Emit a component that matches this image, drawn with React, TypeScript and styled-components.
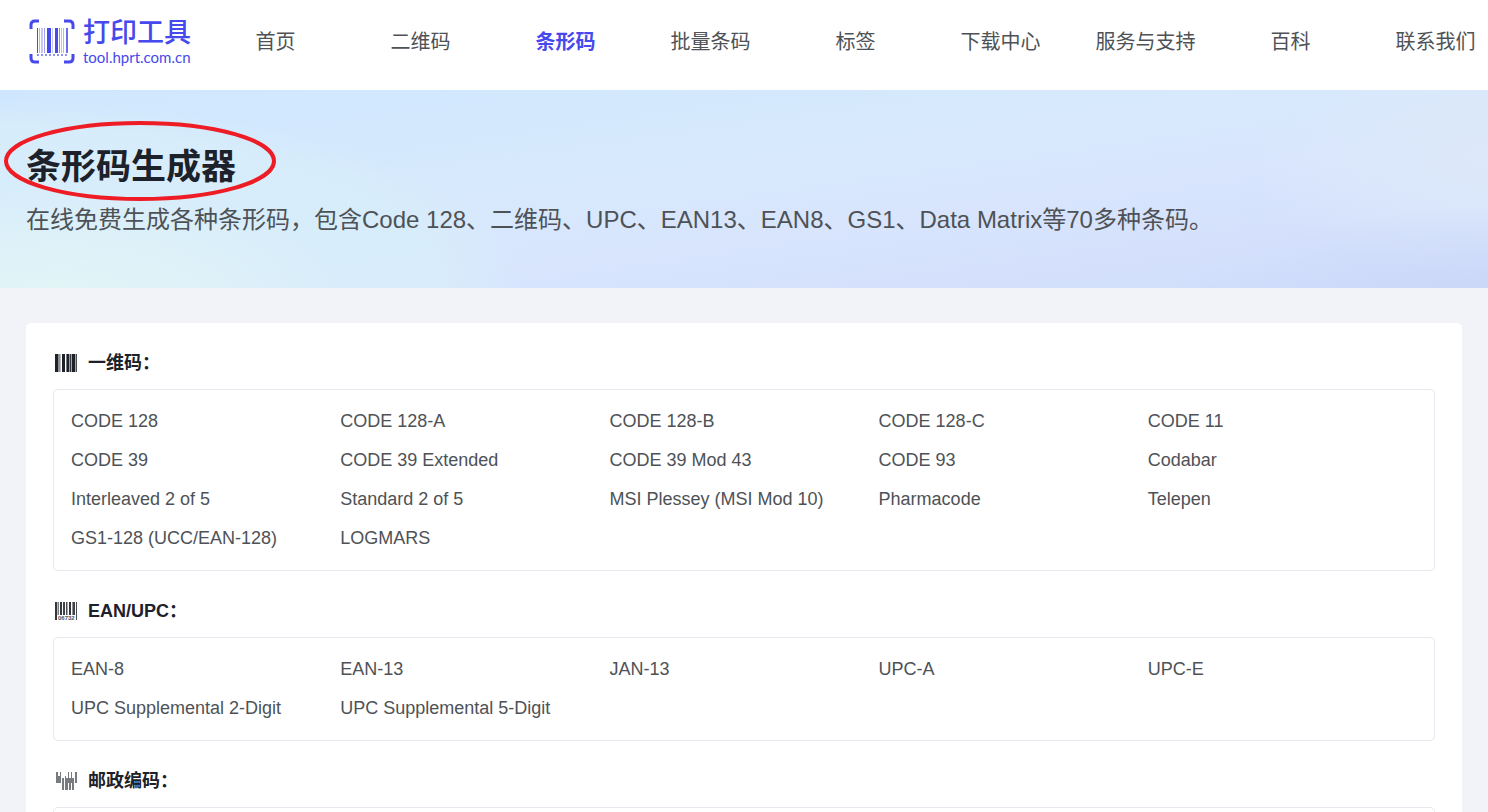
import React from "react";
import styled, { createGlobalStyle } from "styled-components";

const GlobalStyle = createGlobalStyle`
  * { box-sizing: border-box; }
  html { overflow: hidden; height: 100%; }
  body {
    margin: 0;
    height: 100%;
    overflow: hidden;
    background: #f2f3f9;
    color: #1d2129;
    font-family: "Liberation Sans", "Noto Sans CJK SC", sans-serif;
  }
  a { color: inherit; text-decoration: none; }
`;

const Header = styled.header`
  display: flex;
  align-items: center;
  height: 90px;
  padding-left: 28px;
  background: #fff;
  overflow: hidden;
`;

const LogoLink = styled.a`
  display: flex;
  flex: none;
  align-items: center;
  gap: 8px;
  width: 175px;
  padding-bottom: 6px;
  && { color: #4649eb; }
`;

const LogoText = styled.span`
  display: flex;
  flex-direction: column;
  white-space: nowrap;
`;

const LogoName = styled.span`
  font-size: 27px;
  line-height: 30px;
  font-weight: 500;
`;

const LogoDomain = styled.span`
  font: 400 15px/18px Lato, sans-serif;
`;

const Nav = styled.nav`
  display: flex;
`;

const NavLink = styled.a<{ $active?: boolean }>`
  flex: none;
  width: 145px;
  font-size: 20px;
  line-height: 30px;
  text-align: center;
  padding-bottom: 6px;
  font-weight: ${(p) => (p.$active ? 700 : 400)};
  && { color: ${(p) => (p.$active ? "#4649eb" : "#4e5256")}; }
`;

const Banner = styled.section`
  height: 198px;
  padding: 53px 26px 0;
  background:
    radial-gradient(ellipse 20% 60% at 4% 108%, rgba(228, 246, 246, 0.95), rgba(228, 246, 246, 0) 100%),
    radial-gradient(ellipse 35% 95% at 0% 100%, rgba(216, 238, 250, 0.8) 0%, rgba(216, 238, 250, 0.8) 85%, rgba(216, 238, 250, 0) 100%),
    radial-gradient(ellipse 26% 50% at 104% 108%, rgba(200, 212, 248, 0.7), rgba(200, 212, 248, 0) 100%),
    radial-gradient(ellipse 16% 60% at 100% 35%, rgba(222, 234, 249, 0.9), rgba(222, 234, 249, 0) 100%),
    linear-gradient(172deg, #cfe7fe 0%, #d3e8fd 25%, #d7e9fc 42%, #d8e5fd 62%, #d5e1fc 80%, #cedcf9 100%);
`;

const Title = styled.h1`
  position: relative;
  width: fit-content;
  margin: 0;
  font-size: 35px;
  line-height: 48px;
  font-weight: 700;
`;

const Marker = styled.svg`
  position: absolute;
  left: -22px;
  top: -23px;
  overflow: visible;
`;

const Subtitle = styled.p`
  margin: 5px 0 0;
  font-size: 24px;
  line-height: 48px;
  color: #4e5256;
`;

const Panel = styled.main`
  margin: 35px 26px 0;
  padding: 22px 27px;
  border-radius: 5px;
  background: #fff;
`;

const Group = styled.section`
  margin-bottom: 22px;
`;

const GroupTitle = styled.h2`
  display: flex;
  align-items: center;
  gap: 10px;
  height: 36px;
  margin: 0 0 8px;
  padding-left: 1px;
  font-size: 18px;
  line-height: 36px;
  font-weight: 700;
`;

const LinkGrid = styled.div`
  display: grid;
  grid-template-columns: repeat(5, 1fr);
  min-height: 100px;
  padding: 12px 17px;
  border: 1px solid #e7e8f0;
  border-radius: 5px;
`;

const CodeLink = styled.a`
  font-size: 18px;
  line-height: 39px;
  white-space: nowrap;
  && { color: #4e5256; }
`;

type Bar = [x: number, width: number, opacity: number];

const logoBars: Bar[] = [
  [9, 1, 1], [11, 1, 0.4], [13, 2, 0.3], [16, 1, 0.5], [19, 4, 1], [24, 1, 0.3],
  [27, 3, 1], [31, 1, 0.6], [33, 1, 0.35], [35, 1, 0.4], [38, 2, 0.8],
];

function LogoMark() {
  return (
    <svg width="47" height="46" viewBox="0 0 47 46" fill="none" stroke="currentColor" aria-hidden="true">
      <path
        d="M3 10V6Q3 2 7 2H11M36 2H41Q45 2 45 6V10M45 35V39Q45 43 41 43H36M11 43H7Q3 43 3 39V35"
        strokeWidth="3"
      />
      {logoBars.map(([x, w, o]) => (
        <rect key={x} x={x} y="9" width={w} height="25" fill="currentColor" stroke="none" opacity={o} />
      ))}
      <path d="M9 36H41" strokeWidth="2" strokeDasharray="2 2" opacity="0.6" />
    </svg>
  );
}

const linearBars: Bar[] = [
  [0, 3, 1], [3, 2, 0.5], [5, 1, 0.3], [7, 3, 1], [11, 1, 0.6], [12, 2, 1], [14, 1, 0.45],
  [15, 1, 0.9], [16, 1, 0.4], [17, 3, 1], [20, 1, 0.4], [21, 1, 0.8],
];

const eanBars: Bar[] = [
  [0, 2, 0.9], [2, 1, 0.3], [3, 1, 0.6], [5, 2, 0.9], [8, 2, 0.85], [11, 1, 0.8], [12, 1, 0.4],
  [14, 2, 0.9], [17, 1, 0.5], [18, 2, 0.85], [21, 1, 0.8],
];

const postalBars: [x: number, y: number, width: number, height: number][] = [
  [1, 1, 2, 11], [3, 5, 2, 7], [5, 1, 1, 11], [7, 7, 2, 12], [10, 5, 1, 14],
  [11, 7, 2, 12], [13, 1, 1, 11], [14, 7, 2, 12], [16, 1, 1, 11], [17, 7, 2, 12], [20, 1, 2, 11],
];

type IconKind = "linear" | "ean" | "postal";

function GroupIcon({ kind }: { kind: IconKind }) {
  return (
    <svg width="24" height="20" viewBox="-1 0 24 20" fill="#1d2129" aria-hidden="true">
      {kind === "linear" &&
        linearBars.map(([x, w, o]) => <rect key={x} x={x} y="1" width={w} height="18" opacity={o} />)}
      {kind === "ean" && (
        <>
          {eanBars.map(([x, w, o], i) => (
            <rect key={x} x={x} y="1" width={w} height={i === 0 || i === eanBars.length - 1 ? 18 : 13} opacity={o} />
          ))}
          <text x="3" y="19" fontSize="6" fontWeight="700" opacity="0.8">06732</text>
        </>
      )}
      {kind === "postal" &&
        postalBars.map(([x, y, w, h]) => <rect key={x} x={x} y={y} width={w} height={h} opacity="0.6" />)}
    </svg>
  );
}

const navItems = ["首页", "二维码", "条形码", "批量条码", "标签", "下载中心", "服务与支持", "百科", "联系我们"];

const groups: { title: string; icon: IconKind; codes: string[] }[] = [
  {
    title: "一维码：",
    icon: "linear",
    codes: [
      "CODE 128", "CODE 128-A", "CODE 128-B", "CODE 128-C", "CODE 11",
      "CODE 39", "CODE 39 Extended", "CODE 39 Mod 43", "CODE 93", "Codabar",
      "Interleaved 2 of 5", "Standard 2 of 5", "MSI Plessey (MSI Mod 10)", "Pharmacode", "Telepen",
      "GS1-128 (UCC/EAN-128)", "LOGMARS",
    ],
  },
  {
    title: "EAN/UPC：",
    icon: "ean",
    codes: ["EAN-8", "EAN-13", "JAN-13", "UPC-A", "UPC-E", "UPC Supplemental 2-Digit", "UPC Supplemental 5-Digit"],
  },
  { title: "邮政编码：", icon: "postal", codes: [] },
];

export default function App() {
  return (
    <>
      <GlobalStyle />
      <Header lang="zh-CN">
        <LogoLink href="#">
          <LogoMark />
          <LogoText>
            <LogoName>打印工具</LogoName>
            <LogoDomain>tool.hprt.com.cn</LogoDomain>
          </LogoText>
        </LogoLink>
        <Nav>
          {navItems.map((item) => (
            <NavLink key={item} href="#" $active={item === "条形码"}>{item}</NavLink>
          ))}
        </Nav>
      </Header>
      <Banner lang="zh-CN">
        <Title>
          条形码生成器
          <Marker width="272" height="80" viewBox="0 0 272 80" fill="none" aria-hidden="true">
            <ellipse cx="136" cy="41" rx="134" ry="38" stroke="#ee1c25" strokeWidth="4" />
          </Marker>
        </Title>
        <Subtitle>在线免费生成各种条形码，包含Code 128、二维码、UPC、EAN13、EAN8、GS1、Data Matrix等70多种条码。</Subtitle>
      </Banner>
      <Panel lang="zh-CN">
        {groups.map((group) => (
          <Group key={group.title}>
            <GroupTitle>
              <GroupIcon kind={group.icon} />
              {group.title}
            </GroupTitle>
            <LinkGrid>
              {group.codes.map((code) => (
                <CodeLink key={code} href="#">{code}</CodeLink>
              ))}
            </LinkGrid>
          </Group>
        ))}
      </Panel>
    </>
  );
}
